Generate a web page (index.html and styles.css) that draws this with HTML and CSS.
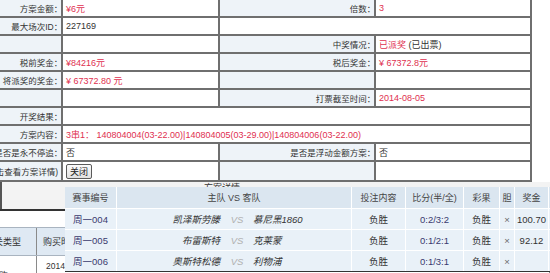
FILE: index.html
```html
<!DOCTYPE html>
<html lang="zh-CN">
<head>
    <meta charset="UTF-8">
    <title>方案详情</title>
    <link rel="stylesheet" href="styles.css">
</head>
<body>
    <!-- Scheme details -->
    <div class="detail">
        <div class="cell lab">方案金额：</div>
        <div class="cell val red">¥6元</div>
        <div class="cell lab">倍数：</div>
        <div class="cell val red">3</div>

        <div class="cell lab">最大场次ID：</div>
        <div class="cell val">227169</div>
        <div class="cell val span2"></div>

        <div class="cell lab"></div>
        <div class="cell val"></div>
        <div class="cell lab">中奖情况：</div>
        <div class="cell val"><span class="red">已派奖</span>&nbsp;(已出票)</div>

        <div class="cell lab">税前奖金：</div>
        <div class="cell val red">¥84216元</div>
        <div class="cell lab">税后奖金：</div>
        <div class="cell val red">¥ 67372.8元</div>

        <div class="cell lab">将派奖的奖金：</div>
        <div class="cell val red">¥ 67372.80 元</div>
        <div class="cell lab"></div>
        <div class="cell val"></div>

        <div class="cell lab"></div>
        <div class="cell val"></div>
        <div class="cell lab">打票截至时间：</div>
        <div class="cell val red">2014-08-05</div>

        <div class="cell lab">开奖结果：</div>
        <div class="cell val span3"></div>

        <div class="cell lab">方案内容：</div>
        <div class="cell val span3 red">3串1：&nbsp;140804004(03-22.00)|140804005(03-29.00)|140804006(03-22.00)</div>

        <div class="cell lab">是否是永不停追：</div>
        <div class="cell val">否</div>
        <div class="cell lab">是否是浮动金额方案：</div>
        <div class="cell val">否</div>

        <div class="cell lab">(点击查看方案详情)</div>
        <div class="cell val"><button type="button" class="btn-close">关闭</button></div>
        <div class="cell lab"></div>
        <div class="cell val"></div>
    </div>

    <!-- Orders underneath the popup -->
    <div class="orders">
        <div class="orders-title">方案详情</div>
        <div class="orders-table">
            <div class="ot-gap"></div>
            <div class="ot-head">
                <div class="ot-cell type">串关类型</div>
                <div class="ot-cell">购买时间</div>
            </div>
            <div class="ot-row">
                <div class="ot-cell type low">代购</div>
                <div class="ot-cell date">2014-08-04 21:30</div>
            </div>
        </div>
    </div>

    <!-- Match popup -->
    <div class="popup">
        <div class="pop-grid pop-head">
            <div>赛事编号</div>
            <div class="team-head">主队 VS 客队</div>
            <div>投注内容</div>
            <div>比分(半/全)</div>
            <div>彩果</div>
            <div>胆</div>
            <div>奖金</div>
            <div></div>
        </div>
        <div class="pop-grid pop-row">
            <div class="code">周一004</div>
            <div class="home">凯泽斯劳滕</div>
            <div class="vs">VS</div>
            <div class="away">慕尼黑1860</div>
            <div>负胜</div>
            <div class="code">0:2/3:2</div>
            <div>负胜</div>
            <div class="dan">×</div>
            <div>100.70</div>
            <div></div>
        </div>
        <div class="pop-grid pop-row">
            <div class="code">周一005</div>
            <div class="home">布雷斯特</div>
            <div class="vs">VS</div>
            <div class="away">克莱蒙</div>
            <div>负胜</div>
            <div class="code">0:1/2:1</div>
            <div>负胜</div>
            <div class="dan">×</div>
            <div>92.12</div>
            <div></div>
        </div>
        <div class="pop-grid pop-row">
            <div class="code">周一006</div>
            <div class="home">奥斯特松德</div>
            <div class="vs">VS</div>
            <div class="away">利物浦</div>
            <div>负胜</div>
            <div class="code">0:1/3:1</div>
            <div>负胜</div>
            <div class="dan">×</div>
            <div></div>
            <div></div>
        </div>
    </div>
</body>
</html>
```

FILE: styles.css
```css
/* General Styles */
* {
    box-sizing: border-box;
}

body {
    margin: 0;
    width: 550px;
    height: 273px;
    overflow: hidden;
    position: relative;
    background-color: #fff;
    color: #333;
    font-family: "Liberation Sans", "Noto Sans CJK SC", sans-serif;
    font-size: 9px;
}

/* Detail table */
.detail {
    display: grid;
    grid-template-columns: 63px 157px 156px 156px;
    grid-template-rows: repeat(9, 18px) 20px;
    width: 532px;
}

.cell {
    display: flex;
    align-items: center;
    padding: 0 3px;
    border-right: 2px solid #6f6f6f;
    border-bottom: 2px solid #6f6f6f;
    white-space: nowrap;
    overflow: hidden;
}

.lab {
    background-color: #eef3f8;
    justify-content: flex-end;
    font-size: 8.5px;
    font-feature-settings: "halt";
}

.val {
    background-color: #fff;
}

.span2 {
    grid-column: span 2;
}

.span3 {
    grid-column: span 3;
}

.red {
    color: #e02f4f;
}

.btn-close {
    height: 15px;
    padding: 0 3px;
    font-family: inherit;
    font-size: 9px;
    color: #222;
    border: 1px solid #5a5a5a;
    border-radius: 2px;
    background: linear-gradient(#fbfbfb, #e0e0e0);
}

/* Orders list under the popup */
.orders {
    height: 91px;
    background-color: #f3f3f3;
}

.orders-title {
    height: 27px;
    padding: 1px 0 0 202px;
    border-left: 2px solid #555;
    line-height: 10px;
}

.orders-table {
    border-top: 2px solid #333;
}

.ot-gap {
    height: 16px;
    background-color: #fff;
}

.ot-head,
.ot-row {
    display: grid;
    grid-template-columns: 37px 1fr;
}

.ot-head {
    height: 29px;
    background-color: #dfe9f3;
    border-top: 1px solid #a9b4c0;
    border-bottom: 1px solid #a9b4c0;
}

.ot-row {
    height: 20px;
    background-color: #fff;
}

.ot-cell {
    display: flex;
    align-items: center;
    padding: 0 4px 0 6px;
    white-space: nowrap;
    overflow: hidden;
    border-right: 1px solid #8a8a8a;
}

.ot-cell.type {
    justify-content: flex-end;
    padding-right: 15px;
}

.ot-cell.low {
    align-items: flex-end;
    padding-right: 28px;
    margin-bottom: -6px;
}

.ot-cell.date {
    padding-left: 9px;
    font-size: 8.5px;
}

/* Match popup */
.popup {
    position: absolute;
    left: 65px;
    top: 187px;
    width: 495px;
    background-color: #e9f1f8;
    border-bottom: 1px solid #333;
}

.pop-grid {
    display: grid;
    grid-template-columns: 52px 107px 26px 102px 54px 58px 36px 15px 34px 11px;
}

.pop-grid > div {
    display: flex;
    align-items: center;
    justify-content: center;
    white-space: nowrap;
    border-right: 1px solid #fff;
}

.pop-head {
    height: 21px;
    background-color: #dbe6f0;
    color: #444;
}

.team-head {
    grid-column: span 3;
}

.pop-row {
    height: 21px;
    border-top: 1px solid #fff;
    font-size: 9.5px;
}

.pop-row .code {
    color: #3a3a6e;
}

.pop-row .home {
    justify-content: flex-end;
    padding-right: 4px;
    font-style: italic;
    border-right: none;
}

.pop-row .vs {
    color: #b0b0b0;
    font-style: italic;
    border-right: none;
}

.pop-row .away {
    justify-content: flex-start;
    padding-left: 3px;
    font-style: italic;
}

.pop-row .dan {
    color: #666;
}
```
